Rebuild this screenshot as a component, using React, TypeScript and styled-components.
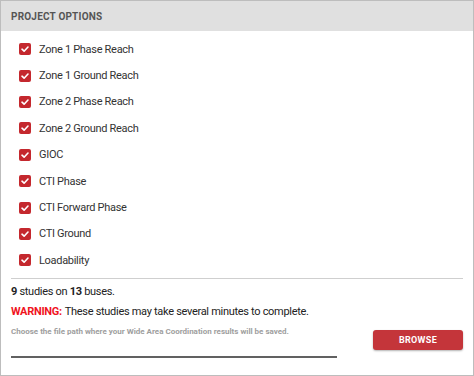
import styled, { createGlobalStyle } from "styled-components";

const GlobalStyle = createGlobalStyle`
  html, body {
    margin: 0;
    padding: 0;
    background: #ffffff;
    font-family: Roboto, "Liberation Sans", sans-serif;
  }
`;

const Panel = styled.div`
  box-sizing: border-box;
  width: 474px;
  height: 376px;
  border: 1px solid #bdbdbd;
  background: #ffffff;
  display: flex;
  flex-direction: column;
`;

const Header = styled.div`
  height: 30px;
  background: #e0e0e0;
  display: flex;
  align-items: center;
  padding: 0 10px;
  font-size: 10px;
  font-weight: 700;
  color: #555555;
  letter-spacing: 0.2px;
`;

const List = styled.div`
  display: flex;
  flex-direction: column;
  padding: 5px 10px 0 18px;
`;

const Row = styled.label`
  height: 26.4px;
  display: flex;
  align-items: center;
  gap: 8px;
  font-size: 11px;
  letter-spacing: -0.3px;
  color: #333333;
`;

const Box = styled.span<{ checked: boolean }>`
  width: 12px;
  height: 12px;
  border-radius: 2px;
  background: ${(p) => (p.checked ? "#c4282e" : "#ffffff")};
  border: ${(p) => (p.checked ? "none" : "1px solid #999")};
  display: flex;
  align-items: center;
  justify-content: center;
  flex-shrink: 0;
`;

const Divider = styled.hr`
  margin: 4px 10px 0 10px;
  border: none;
  border-top: 1px solid #cfcfcf;
`;

const Footer = styled.div`
  display: flex;
  flex-direction: column;
  padding: 0 10px;
`;

const Line = styled.div`
  height: 20px;
  display: flex;
  align-items: center;
  font-size: 11px;
  letter-spacing: -0.3px;
  color: #222222;
  b {
    font-weight: 700;
  }
`;

const Warn = styled.span`
  color: #f0141e;
  font-weight: 700;
  margin-right: 3px;
`;

const PathRow = styled.div`
  display: flex;
  align-items: flex-start;
  justify-content: space-between;
`;

const PathColumn = styled.div`
  display: flex;
  flex-direction: column;
  width: 326px;
  padding-top: 2px;
`;

const Hint = styled.div`
  height: 16px;
  display: flex;
  align-items: center;
  font-size: 8px;
  font-weight: 700;
  color: #9e9e9e;
`;

const PathInput = styled.input`
  height: 16px;
  border: none;
  border-bottom: 2px solid #616161;
  outline: none;
  padding: 0;
  font-size: 11px;
  font-family: inherit;
  background: transparent;
`;

const Browse = styled.button`
  margin-top: 8px;
  width: 90px;
  height: 20px;
  border: none;
  border-radius: 3px;
  background: #c4353a;
  color: #ffffff;
  font-family: inherit;
  font-size: 9px;
  font-weight: 700;
  letter-spacing: 0.3px;
  box-shadow: 0 1px 2px rgba(0, 0, 0, 0.3);
  cursor: pointer;
`;

const options = [
  "Zone 1 Phase Reach",
  "Zone 1 Ground Reach",
  "Zone 2 Phase Reach",
  "Zone 2 Ground Reach",
  "GIOC",
  "CTI Phase",
  "CTI Forward Phase",
  "CTI Ground",
  "Loadability",
];

function Check({ checked }: { checked: boolean }) {
  return (
    <Box checked={checked}>
      {checked && (
        <svg width="10" height="10" viewBox="0 0 10 10">
          <path
            d="M2 5.2 L4.1 7.2 L8 3"
            fill="none"
            stroke="#ffffff"
            strokeWidth="1.6"
            strokeLinecap="round"
            strokeLinejoin="round"
          />
        </svg>
      )}
    </Box>
  );
}

export default function App() {
  return (
    <>
      <GlobalStyle />
      <Panel>
        <Header>PROJECT OPTIONS</Header>
        <List>
          {options.map((name) => (
            <Row key={name}>
              <Check checked />
              {name}
            </Row>
          ))}
        </List>
        <Divider />
        <Footer>
          <Line style={{ marginTop: 3 }}>
            <b>9</b>&nbsp;studies on&nbsp;<b>13</b>&nbsp;buses.
          </Line>
          <Line>
            <Warn>WARNING:</Warn> These studies may take several minutes to
            complete.
          </Line>
          <PathRow>
            <PathColumn>
              <Hint>
                Choose the file path where your Wide Area Coordination results
                will be saved.
              </Hint>
              <PathInput />
            </PathColumn>
            <Browse>BROWSE</Browse>
          </PathRow>
        </Footer>
      </Panel>
    </>
  );
}
